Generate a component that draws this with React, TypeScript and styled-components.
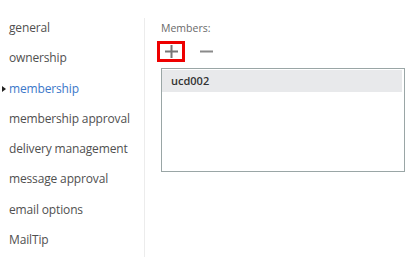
import React from "react";
import styled, { createGlobalStyle } from "styled-components";

const GlobalStyle = createGlobalStyle`
  html, body {
    margin: 0;
    padding: 0;
    background: #ffffff;
  }
  body {
    font-family: "Open Sans", "Noto Sans", "Liberation Sans", sans-serif;
  }
`;

const Page = styled.div`
  width: 420px;
  height: 257px;
  display: flex;
  flex-direction: row;
  overflow: hidden;
`;

const Nav = styled.ul`
  width: 144px;
  margin: 0;
  padding: 12px 0 0 0;
  list-style: none;
  flex-shrink: 0;
`;

const NavItem = styled.li<{ $active?: boolean }>`
  position: relative;
  height: 30.3px;
  line-height: 31px;
  padding-left: 9px;
  font-size: 12px;
  letter-spacing: -0.15px;
  color: ${(p) => (p.$active ? "#3b78c9" : "#505050")};
  white-space: nowrap;
`;

const Caret = styled.span`
  position: absolute;
  left: 2px;
  top: 13px;
  width: 0;
  height: 0;
  border-top: 3px solid transparent;
  border-bottom: 3px solid transparent;
  border-left: 4px solid #222222;
`;

const Panel = styled.section`
  flex: 1;
  margin-top: 18px;
  border-left: 1px solid #ececec;
  padding-left: 16px;
  display: flex;
  flex-direction: column;
`;

const Label = styled.div`
  font-size: 10.5px;
  color: #6a6a6a;
  margin-top: 3px;
  height: 15px;
  line-height: 15px;
`;

const Toolbar = styled.div`
  display: flex;
  align-items: center;
  gap: 7px;
  margin-top: 5px;
  margin-left: -4px;
`;

const ToolButton = styled.button<{ $highlight?: boolean }>`
  width: 28px;
  height: 21px;
  padding: 0;
  margin: 0;
  box-sizing: border-box;
  border: 3px solid ${(p) => (p.$highlight ? "#ee0000" : "transparent")};
  background: transparent;
  display: flex;
  align-items: center;
  justify-content: center;
`;

const MemberList = styled.div`
  width: 244px;
  height: 104px;
  box-sizing: border-box;
  border: 1px solid #9aa6a6;
  margin-top: 6px;
  padding: 1px 2px 0 0;
`;

const MemberRow = styled.div<{ $selected?: boolean }>`
  height: 22px;
  line-height: 22px;
  padding-left: 9px;
  font-size: 11px;
  font-weight: 600;
  color: #333333;
  background: ${(p) => (p.$selected ? "#e8e9eb" : "transparent")};
`;

const PlusIcon = () => (
  <svg width="13" height="13" viewBox="0 0 13 13">
    <rect x="5.5" y="0" width="2" height="13" fill="#777777" />
    <rect x="0" y="5.5" width="13" height="2" fill="#777777" />
  </svg>
);

const MinusIcon = () => (
  <svg width="13" height="13" viewBox="0 0 13 13">
    <rect x="0" y="5.5" width="13" height="2" fill="#8a8a8a" />
  </svg>
);

const sections = [
  "general",
  "ownership",
  "membership",
  "membership approval",
  "delivery management",
  "message approval",
  "email options",
  "MailTip",
];

export default function App() {
  return (
    <>
      <GlobalStyle />
      <Page>
        <Nav>
          {sections.map((s) => (
            <NavItem key={s} $active={s === "membership"}>
              {s === "membership" && <Caret />}
              {s}
            </NavItem>
          ))}
        </Nav>
        <Panel>
          <Label>Members:</Label>
          <Toolbar>
            <ToolButton $highlight aria-label="add">
              <PlusIcon />
            </ToolButton>
            <ToolButton aria-label="remove">
              <MinusIcon />
            </ToolButton>
          </Toolbar>
          <MemberList>
            <MemberRow $selected>ucd002</MemberRow>
          </MemberList>
        </Panel>
      </Page>
    </>
  );
}
